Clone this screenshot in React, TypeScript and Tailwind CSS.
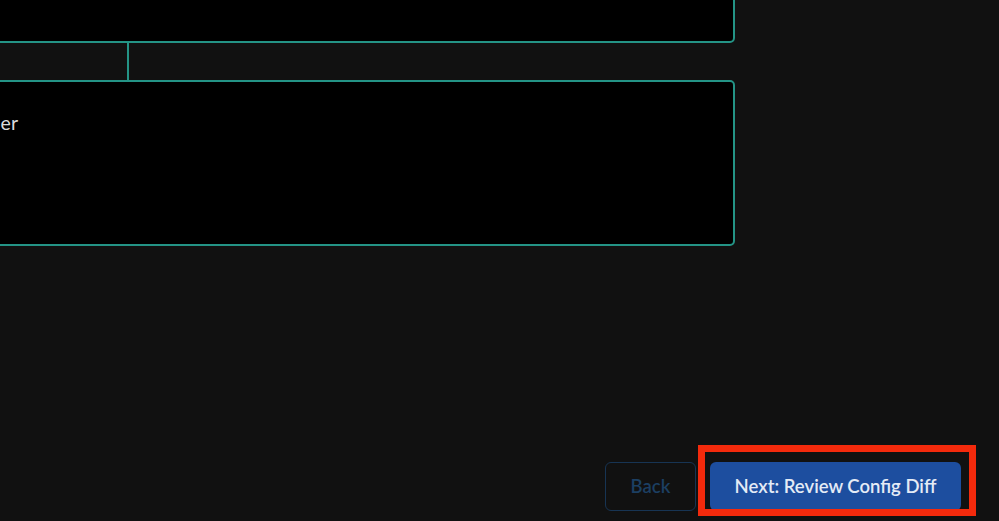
import React from "react";

const teal = "border-[#249486]";

export default function App() {
  return (
    <div
      className="relative h-[521px] w-[999px] overflow-hidden bg-[#111111] text-[#dcdcdc]"
      style={{ fontFamily: "Lato, 'Open Sans', sans-serif" }}
    >
      <div className="ml-[-300px] w-[1035px]">
        {/* output panel (top cut off) */}
        <div className={`mt-[-60px] h-[103px] rounded-[5px] border-2 ${teal} bg-black`} />

        {/* splitter row */}
        <div className="flex h-[37px]">
          <div className={`w-[429px] border-r-2 ${teal}`} />
        </div>

        {/* notes box */}
        <div className={`h-[166px] rounded-[5px] border-2 ${teal} bg-black pt-[29px]`}>
          <div className="w-[316px] whitespace-nowrap text-right text-[19.5px] leading-6">
            Optional change identifier
          </div>
        </div>
      </div>

      {/* footer actions */}
      <div className="mt-[216px] flex justify-end gap-[14px] pr-[38px]">
        <button className="h-[49px] w-[91px] rounded-[6px] border border-[#173453] text-[18.5px] font-semibold text-[#1c3f62]">
          Back
        </button>
        <button className="h-[49px] w-[251px] rounded-[6px] bg-[#1d4e9f] text-[18.5px] font-semibold text-[#e4ebf6]">
          Next: Review Config Diff
        </button>
      </div>

      {/* highlight annotation */}
      <div className="pointer-events-none absolute left-[698px] top-[445px] h-[71px] w-[278px] border-[7px] border-[#f42a0c]" />
    </div>
  );
}
